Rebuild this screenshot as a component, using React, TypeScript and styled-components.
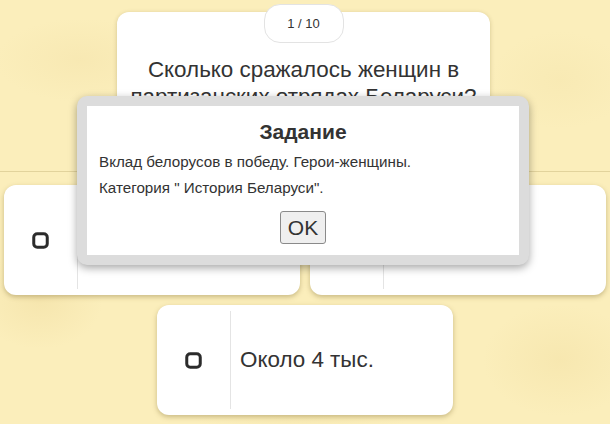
import React from "react";
import styled, { createGlobalStyle } from "styled-components";

const Global = createGlobalStyle`
  html, body { margin: 0; padding: 0; }
  body {
    width: 610px;
    height: 424px;
    overflow: hidden;
    font-family: "Liberation Sans", Arial, sans-serif;
    color: #333;
    background-color: #fbeebb;
    background-image:
      radial-gradient(ellipse 90px 70px at 40px 300px, rgba(236, 214, 150, 0.35), transparent 70%),
      radial-gradient(ellipse 110px 80px at 560px 360px, rgba(238, 216, 150, 0.3), transparent 70%),
      radial-gradient(ellipse 120px 60px at 80px 60px, rgba(240, 220, 160, 0.3), transparent 70%),
      radial-gradient(ellipse 100px 70px at 560px 80px, rgba(240, 222, 160, 0.25), transparent 70%),
      radial-gradient(ellipse 160px 50px at 300px 410px, rgba(240, 222, 160, 0.3), transparent 70%);
  }
`;

const Page = styled.div`
  position: relative;
  width: 610px;
  height: 424px;
`;

const Header = styled.header`
  height: 172px;
  border-bottom: 1px solid #e2d39c;
  box-sizing: border-box;
  display: flex;
  justify-content: center;
  padding: 12px 3px 0 0;
`;

const QuestionCard = styled.section`
  width: 373px;
  height: 150px;
  background: #fff;
  border-radius: 12px;
  box-shadow: 0 1px 4px rgba(120, 100, 40, 0.3);
  display: flex;
  flex-direction: column;
  align-items: center;
`;

const Counter = styled.div`
  margin-top: -8px;
  width: 80px;
  height: 39px;
  box-sizing: border-box;
  border: 1px solid #e3e3e3;
  border-radius: 16px;
  background: #fff;
  display: flex;
  align-items: center;
  justify-content: center;
  font-size: 13px;
  color: #333;
`;

const QuestionText = styled.h1`
  margin: 13px 10px 0;
  font-weight: normal;
  font-size: 22.4px;
  line-height: 27px;
  text-align: center;
  color: #333;
`;

const Answers = styled.main`
  display: flex;
  flex-wrap: wrap;
  justify-content: center;
  gap: 10px 10px;
  padding: 13px 3px 0;
`;

const AnswerCard = styled.div`
  width: 296px;
  height: 110px;
  box-sizing: border-box;
  background: #fff;
  border-radius: 12px;
  box-shadow: 0 2px 5px rgba(110, 90, 30, 0.35);
  display: flex;
  align-items: stretch;
`;

const CheckCell = styled.div`
  width: 73px;
  flex: none;
  display: flex;
  align-items: center;
  justify-content: center;
  border-right: 1px solid #e4e4e4;
  margin: 6px 0;
`;

const AnswerText = styled.div`
  display: flex;
  align-items: center;
  padding-left: 9px;
  font-size: 22.4px;
  color: #333;
`;

const Overlay = styled.div`
  position: absolute;
  left: 77px;
  top: 96px;
  width: 452px;
  height: 169px;
  box-sizing: border-box;
  padding: 10px;
  background: #dcdcdc;
  border-radius: 10px;
  box-shadow: 0 3px 8px rgba(0, 0, 0, 0.35);
`;

const DialogBody = styled.div`
  height: 100%;
  background: #fff;
  box-sizing: border-box;
  padding: 14px 12px 0;
  display: flex;
  flex-direction: column;
`;

const DialogTitle = styled.h2`
  margin: 0;
  font-size: 21px;
  line-height: 24px;
  font-weight: bold;
  text-align: center;
  color: #333;
`;

const DialogText = styled.p`
  margin: 5px 0 0;
  font-size: 15.2px;
  line-height: 26px;
  color: #333;
`;

const OkButton = styled.button`
  align-self: center;
  margin-top: 10px;
  width: 46px;
  height: 33px;
  padding: 0;
  font-family: "Liberation Sans", Arial, sans-serif;
  font-size: 21px;
  color: #333;
  background: #efefef;
  border: 1px solid #8a8a8a;
  border-radius: 3px;
`;

const CheckIcon = () => (
  <svg width="17" height="17" viewBox="0 0 17 17">
    <rect x="1.75" y="1.75" width="13.5" height="13.5" rx="3.5" fill="none" stroke="#2b2b2b" strokeWidth="3" />
  </svg>
);

const answers = ["", "", "Около 4 тыс."];

export default function App() {
  return (
    <>
      <Global />
      <Page>
        <Header>
          <QuestionCard>
            <Counter>1 / 10</Counter>
            <QuestionText>
              Сколько сражалось женщин в<br />партизанских отрядах Беларуси?
            </QuestionText>
          </QuestionCard>
        </Header>
        <Answers>
          {answers.map((a, i) => (
            <AnswerCard key={i}>
              <CheckCell>
                <CheckIcon />
              </CheckCell>
              <AnswerText>{a}</AnswerText>
            </AnswerCard>
          ))}
        </Answers>
        <Overlay>
          <DialogBody>
            <DialogTitle>Задание</DialogTitle>
            <DialogText>
              Вклад белорусов в победу. Герои-женщины.
              <br />
              Категория " История Беларуси".
            </DialogText>
            <OkButton>OK</OkButton>
          </DialogBody>
        </Overlay>
      </Page>
    </>
  );
}
